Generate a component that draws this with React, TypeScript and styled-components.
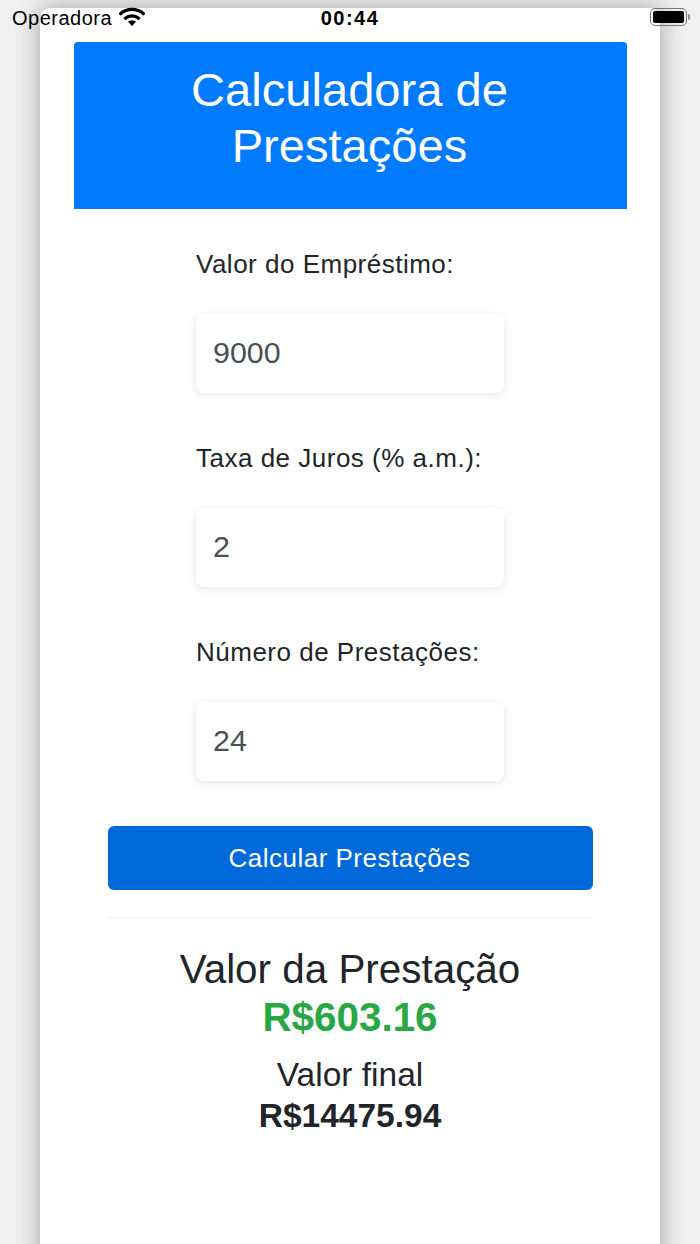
import React from "react";
import styled, { createGlobalStyle } from "styled-components";

const GlobalStyle = createGlobalStyle`
  html, body {
    margin: 0;
    padding: 0;
    height: 1244px;
    overflow: hidden;
    background-color: #f0f0f0;
    font-family: "Liberation Sans", Arial, sans-serif;
    color: #212529;
  }
`;

const fields = [
  { label: "Valor do Empréstimo:", value: "9000" },
  { label: "Taxa de Juros (% a.m.):", value: "2" },
  { label: "Número de Prestações:", value: "24" },
];

const App = () => {
  return (
    <Page>
      <GlobalStyle />
      <StatusBar>
        <Carrier>
          Operadora
          <svg width="26" height="19" viewBox="0 0 26 19">
            <path d="M1.800 6.600C8 1 18 1 24.200 6.600" fill="none" stroke="#000" strokeWidth="3.400" strokeLinecap="round" />
            <path d="M6.400 11.200C10 8 16 8 19.600 11.200" fill="none" stroke="#000" strokeWidth="3.200" strokeLinecap="round" />
            <path d="M9 14.800Q13 11.800 17 14.800L13 19z" fill="#000" />
          </svg>
        </Carrier>
        <Clock>00:44</Clock>
        <Battery>
          <BatteryBody>
            <BatteryLevel />
          </BatteryBody>
          <BatteryCap />
        </Battery>
      </StatusBar>
      <Card>
        <Header>
          <Title>Calculadora de Prestações</Title>
        </Header>
        <Form>
          {fields.map(field => (
            <Field key={field.label}>
              <Label>{field.label}</Label>
              <Input type="text" defaultValue={field.value} />
            </Field>
          ))}
        </Form>
        <Content>
          <SubmitButton>Calcular Prestações</SubmitButton>
          <Divider />
          <Result>
            <ResultTitle>Valor da Prestação</ResultTitle>
            <Installment>R$603.16</Installment>
            <TotalTitle>Valor final</TotalTitle>
            <Total>R$14475.94</Total>
          </Result>
        </Content>
      </Card>
    </Page>
  );
};

const Page = styled.div`
  position: relative;
  height: 1244px;
  padding-top: 8px;
  box-sizing: border-box;
  overflow: hidden;
`;

const StatusBar = styled.div`
  position: absolute;
  top: 0;
  left: 0;
  right: 0;
  height: 36px;
  z-index: 2;
  color: #000;
`;

const Carrier = styled.div`
  position: absolute;
  left: 12px;
  top: 7px;
  display: flex;
  align-items: center;
  gap: 7px;
  font-size: 20px;
  line-height: 22px;
  letter-spacing: 0.5px;

  svg {
    margin-top: -4px;
  }
`;

const Clock = styled.div`
  position: absolute;
  left: 0;
  right: 0;
  top: 7px;
  text-align: center;
  font-size: 20px;
  line-height: 22px;
  font-weight: 700;
  letter-spacing: 1.500px;
`;

const Battery = styled.div`
  position: absolute;
  left: 650px;
  top: 8px;
  display: flex;
  align-items: center;
  gap: 1px;
`;

const BatteryBody = styled.div`
  width: 37px;
  height: 18px;
  padding: 2px;
  box-sizing: border-box;
  border: 1.500px solid #777;
  border-radius: 5px;
`;

const BatteryLevel = styled.div`
  height: 100%;
  background-color: #000;
  border-radius: 2px;
`;

const BatteryCap = styled.div`
  width: 2px;
  height: 6px;
  background-color: #888;
  border-radius: 0 2px 2px 0;
`;

const Card = styled.div`
  width: 620px;
  height: 1300px;
  margin: 0 auto;
  padding: 34px 33px 0 34px;
  box-sizing: border-box;
  background-color: #fff;
  border-radius: 10px;
  box-shadow: 0 0 24px rgba(0, 0, 0, 0.34);
`;

const Header = styled.header`
  height: 167px;
  padding: 20px 18px 0 16px;
  box-sizing: border-box;
  background-color: #007bff;
  border-radius: 4px 4px 0 0;
  color: #fff;
  text-align: center;
`;

const Title = styled.h1`
  margin: 0;
  font-size: 47.100px;
  line-height: 56px;
  font-weight: 400;
`;

const Form = styled.div`
  width: 308px;
  margin: 40px auto 0 122px;
`;

const Field = styled.div`
  height: 194px;
`;

const Label = styled.label`
  display: block;
  height: 65px;
  box-sizing: border-box;
  font-size: 26px;
  line-height: 30px;
  letter-spacing: 0.5px;
`;

const Input = styled.input`
  display: block;
  width: 100%;
  height: 79px;
  padding: 0 17px 2px;
  box-sizing: border-box;
  border: none;
  outline: none;
  border-radius: 8px;
  background-color: #fff;
  box-shadow: 0 2px 8px rgba(0, 0, 0, 0.1);
  color: #495057;
  font-family: inherit;
  font-size: 30.400px;
`;

const Content = styled.div`
  width: 485px;
  margin: -5px 0 0 34px;
`;

const SubmitButton = styled.button`
  display: block;
  width: 100%;
  height: 64px;
  padding: 0 2px 0 0;
  border: none;
  border-radius: 6px;
  background-color: #0069d9;
  color: #fff;
  font-family: inherit;
  font-size: 26px;
  letter-spacing: 0.5px;
`;

const Divider = styled.hr`
  height: 1px;
  margin: 27px 0 0;
  border: none;
  background-color: #f3f3f3;
`;

const Result = styled.div`
  margin-top: 27px;
  padding-right: 1px;
  text-align: center;
`;

const ResultTitle = styled.div`
  font-size: 40.400px;
  line-height: 48px;
`;

const Installment = styled.div`
  color: #28a745;
  font-size: 40.400px;
  line-height: 48px;
  font-weight: 700;
`;

const TotalTitle = styled.div`
  margin-top: 13px;
  font-size: 33.500px;
  line-height: 41px;
`;

const Total = styled.div`
  font-size: 33.500px;
  line-height: 41px;
  font-weight: 700;
`;

export default App;
